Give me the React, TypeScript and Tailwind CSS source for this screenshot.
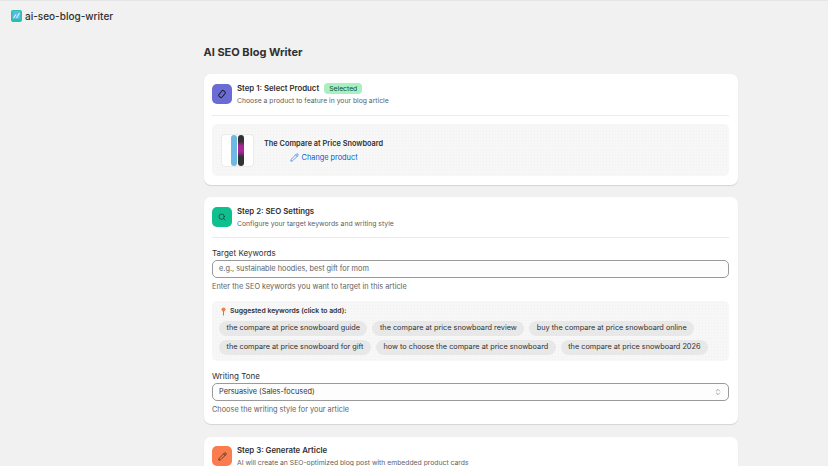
import { Pencil, Search, ChevronsUpDown } from "lucide-react"

const keywordRows = [
  ["the compare at price snowboard guide", "the compare at price snowboard review", "buy the compare at price snowboard online"],
  ["the compare at price snowboard for gift", "how to choose the compare at price snowboard", "the compare at price snowboard 2026"],
]

function StepHeader({ color, icon, title, sub, badge }: { color: string; icon: React.ReactNode; title: string; sub: string; badge?: string }) {
  return (
    <div className="flex items-center gap-[5px]">
      <div className={`flex h-[20px] w-[20px] items-center justify-center rounded-[5px] text-[#202223] ${color}`}>{icon}</div>
      <div className="flex flex-col">
        <div className="flex h-[13px] items-center gap-[5px]">
          <span className="whitespace-nowrap text-[7.8px] font-semibold text-[#303030]">{title}</span>
          {badge && <span className="rounded-[4px] bg-[#a8f0c0] px-[5px] py-[1px] text-[6.8px] leading-[9px] text-[#0c5132]">{badge}</span>}
        </div>
        <span className="mt-[1px] whitespace-nowrap text-[6.8px] leading-[10px] text-[#616161]">{sub}</span>
      </div>
    </div>
  )
}

export default function App() {
  return (
    <div className="h-[466px] w-[828px] overflow-hidden bg-[#f1f1f1] font-['Inter',sans-serif]">
      <div className="h-px bg-[#e6e6e6]" />
      <div className="flex h-[30px] items-center gap-[3px] pl-[11px]">
        <svg width="11" height="12" viewBox="0 0 11 12">
          <rect width="11" height="12" rx="2" fill="#22c3a6" />
          <rect x="1.5" y="1" width="8" height="8" rx="1" fill="#5cb8e8" />
          <path d="M2.5 8 L5 4.5 M5.5 8 L8.5 3" stroke="#dff5f5" strokeWidth="1.2" />
        </svg>
        <span className="whitespace-nowrap text-[10px] font-medium text-[#303030]">ai-seo-blog-writer</span>
      </div>

      <div className="ml-[203.5px] w-[534px]">
        <h1 className="mt-[12px] h-[18px] text-[11px] font-bold leading-[18px] text-[#303030]">AI SEO Blog Writer</h1>

        <section className="mt-[13px] h-[111px] rounded-[7px] bg-white px-[8.5px] pt-[8px] shadow-[0_1px_1px_rgba(0,0,0,0.12)]">
          <StepHeader
            color="bg-[#6a6bd4]"
            icon={
              <svg width="10" height="10" viewBox="0 0 10 10" fill="none" stroke="#202223" strokeWidth="1">
                <rect x="3" y="1.5" width="4" height="7" rx="1" transform="rotate(40 5 5)" />
              </svg>
            }
            title="Step 1: Select Product"
            sub="Choose a product to feature in your blog article"
            badge="Selected"
          />
          <div className="mt-[9px] h-px bg-[#ebebeb]" />
          <div className="mt-[8px] flex h-[52px] items-center gap-[10px] rounded-[5px] bg-[#f7f7f7] bg-[radial-gradient(#f1f1f1_0.5px,transparent_0.5px)] bg-[length:3px_3px] pl-[9px]">
            <div className="flex h-[33px] w-[33px] items-center justify-center gap-[1px] rounded-[4px] border border-[#ebebeb] bg-white">
              <div className="h-[31px] w-[6px] rounded-full bg-[#6db9e3]" />
              <div className="h-[31px] w-[6px] rounded-full bg-[linear-gradient(#333_20%,#a8259a_35%,#a8259a_55%,#333_70%)]" />
            </div>
            <div className="flex flex-col items-center pt-[2px]">
              <span className="whitespace-nowrap text-[7.35px] font-semibold leading-[12px] text-[#303030]">The Compare at Price Snowboard</span>
              <span className="mt-[1px] flex items-center gap-[3px] whitespace-nowrap text-[7.35px] leading-[14px] text-[#005bd3]">
                <Pencil size={9} strokeWidth={1.5} />
                Change product
              </span>
            </div>
          </div>
        </section>

        <section className="mt-[12px] h-[227px] rounded-[7px] bg-white px-[8.5px] pt-[8px] shadow-[0_1px_1px_rgba(0,0,0,0.12)]">
          <StepHeader
            color="bg-[#0fc08f]"
            icon={<Search size={8} strokeWidth={1.8} />}
            title="Step 2: SEO Settings"
            sub="Configure your target keywords and writing style"
          />
          <div className="mt-[8px] h-px bg-[#ebebeb]" />
          <div className="mt-[10px] text-[8px] leading-[10px] text-[#303030]">Target Keywords</div>
          <div className="mt-[2px] flex h-[18px] items-center rounded-[5px] border border-[#9a9a9a] bg-[#fdfdfd] pl-[6px] text-[7.35px] text-[#616161]">
            e.g., sustainable hoodies, best gift for mom
          </div>
          <div className="mt-[2px] text-[7.35px] leading-[13px] text-[#616161]">Enter the SEO keywords you want to target in this article</div>

          <div className="mt-[8px] h-[60px] rounded-[5px] bg-[#f7f7f7] bg-[radial-gradient(#f1f1f1_0.5px,transparent_0.5px)] bg-[length:3px_3px] pl-[7px] pt-[5px]">
            <div className="flex items-center gap-[4px] pl-[2px] text-[6.85px] font-semibold leading-[10px] text-[#303030]">
              <svg width="5" height="9" viewBox="0 0 5 9" fill="none">
                <circle cx="2.5" cy="2.5" r="2" fill="#e8824e" />
                <path d="M2.5 4 V8.5" stroke="#8a8a8a" strokeWidth="1" />
              </svg>
              Suggested keywords (click to add):
            </div>
            {keywordRows.map((row, i) => (
              <div key={i} className="mt-[4.5px] flex gap-[5px]">
                {row.map((k) => (
                  <span key={k} className="flex h-[15px] items-center whitespace-nowrap rounded-full bg-[#e8e8e8] px-[7.5px] text-[7.3px] text-[#303030]">{k}</span>
                ))}
              </div>
            ))}
          </div>

          <div className="mt-[10px] text-[8px] leading-[10px] text-[#303030]">Writing Tone</div>
          <div className="mt-[2px] flex h-[18px] items-center justify-between rounded-[5px] border border-[#9a9a9a] bg-[#fdfdfd] px-[6px] text-[7.35px] text-[#303030]">
            Persuasive (Sales-focused)
            <ChevronsUpDown size={8} strokeWidth={1.5} className="text-[#4a4a4a]" />
          </div>
          <div className="mt-[2px] text-[7.35px] leading-[13px] text-[#616161]">Choose the writing style for your article</div>
        </section>

        <section className="mt-[13px] h-[60px] rounded-[7px] bg-white px-[8.5px] pt-[7px] shadow-[0_1px_1px_rgba(0,0,0,0.12)]">
          <StepHeader
            color="bg-[#fb7d4f]"
            icon={<Pencil size={9} strokeWidth={1.8} />}
            title="Step 3: Generate Article"
            sub="AI will create an SEO-optimized blog post with embedded product cards"
          />
        </section>
      </div>
    </div>
  )
}
